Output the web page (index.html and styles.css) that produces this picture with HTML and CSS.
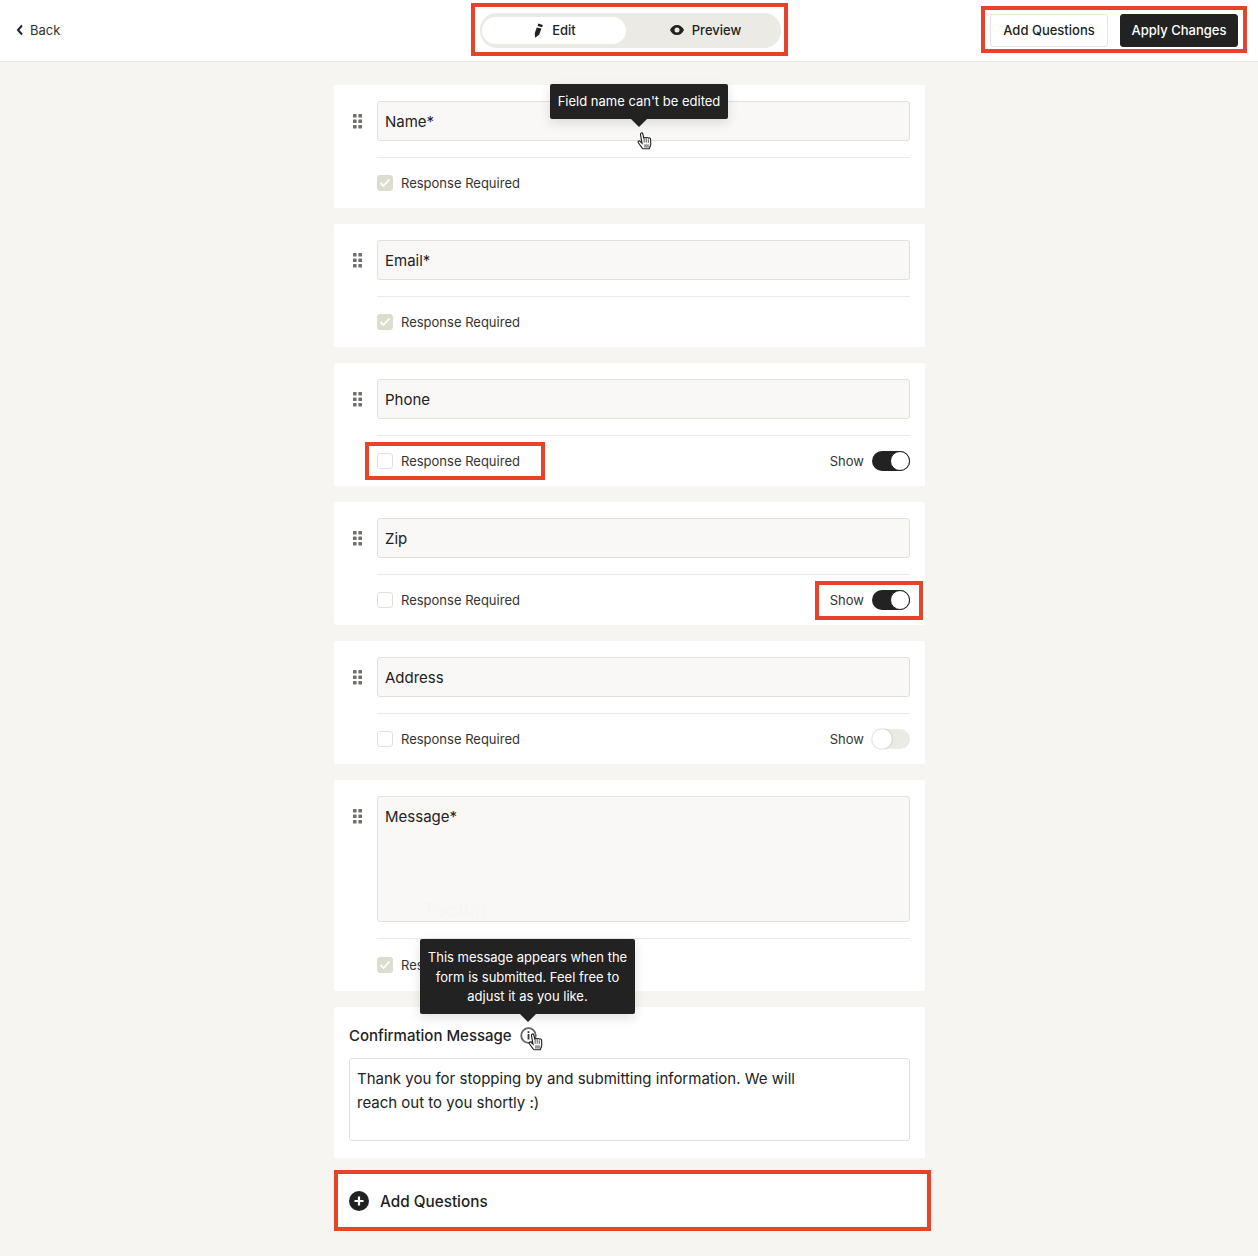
FILE: index.html
```html
<!DOCTYPE html>
<html lang="en">
<head>
<meta charset="utf-8">
<title>Form editor</title>
<link rel="stylesheet" href="styles.css">
</head>
<body>
<svg width="0" height="0" class="defs">
  <defs>
    <g id="hand">
      <path d="M5.200 15 2 10.600c-.8-1.100.7-2.200 1.600-1.300l1.700 1.700L3.900 3c-.2-1.400 1.800-1.800 2.100-.4l1 4.300c0-1.300 1.900-1.400 2.100-.2 .1-1.100 1.900-1.100 2 .1 .3-.9 1.800-.7 1.900.4l.2 4.400c0 1.200-.4 2.200-1 3.100l-.3 1.300H6.200z" fill="#fff" stroke="#222" stroke-width="1"/>
      <path d="M7.200 7v3.500M9.100 7v3.500M11 7.500v3" fill="none" stroke="#222" stroke-width=".7"/>
      <rect x="7" y="12" width="4.800" height="3" fill="#999"/>
    </g>
    <g id="grip" fill="#70706c">
      <rect x="0" y="0" width="3.600" height="3.500" rx=".6"/><rect x="5.400" y="0" width="3.600" height="3.500" rx=".6"/>
      <rect x="0" y="5.500" width="3.600" height="3.500" rx=".6"/><rect x="5.400" y="5.500" width="3.600" height="3.500" rx=".6"/>
      <rect x="0" y="11" width="3.600" height="3.500" rx=".6"/><rect x="5.400" y="11" width="3.600" height="3.500" rx=".6"/>
    </g>
  </defs>
</svg>

<header class="topbar">
  <a class="back">
    <svg class="back-icon" width="8" height="12" viewBox="0 0 8 12"><path d="M6 1.500 2 6l4 4.500" fill="none" stroke="#222" stroke-width="2"/></svg>
    Back
  </a>
  <div class="seg">
    <div class="seg-item seg-active">
      <svg width="12" height="15" viewBox="0 0 12 15"><path d="M4.800 4.400 9.400 5.600 7.200 11.800 3 14.800 2.800 10z" fill="#222"/><path d="M5.600 2.900 6.300.6 10.900 1.900 10.100 4.200z" fill="#222"/></svg>
      <span>Edit</span>
    </div>
    <div class="seg-item seg-rest">
      <svg width="14" height="10" viewBox="0 0 14 10"><path d="M7 0C3.800 0 1.300 2 0 5c1.300 3 3.800 5 7 5s5.700-2 7-5c-1.300-3-3.800-5-7-5zm0 7.500A2.500 2.500 0 1 1 7 2.500a2.500 2.500 0 0 1 0 5z" fill="#222"/></svg>
      <span>Preview</span>
    </div>
  </div>
  <div class="actions">
    <button class="btn btn-light">Add Questions</button>
    <button class="btn btn-dark">Apply Changes</button>
  </div>
</header>

<main class="list">
  <section class="card">
    <div class="field-row">
      <svg class="grip" width="9" height="15" viewBox="0 0 9 15"><use href="#grip"/></svg>
      <div class="field">Name*</div>
    </div>
    <div class="options">
      <label class="check"><span class="box box-on"><svg width="12" height="10" viewBox="0 0 12 10"><path d="M1.500 5 4.500 8 10.500 1.500" fill="none" stroke="#fff" stroke-width="1.800"/></svg></span>Response Required</label>
    </div>
  </section>

  <section class="card">
    <div class="field-row">
      <svg class="grip" width="9" height="15" viewBox="0 0 9 15"><use href="#grip"/></svg>
      <div class="field">Email*</div>
    </div>
    <div class="options">
      <label class="check"><span class="box box-on"><svg width="12" height="10" viewBox="0 0 12 10"><path d="M1.500 5 4.500 8 10.500 1.500" fill="none" stroke="#fff" stroke-width="1.800"/></svg></span>Response Required</label>
    </div>
  </section>

  <section class="card">
    <div class="field-row">
      <svg class="grip" width="9" height="15" viewBox="0 0 9 15"><use href="#grip"/></svg>
      <div class="field">Phone</div>
    </div>
    <div class="options">
      <label class="check"><span class="box"></span>Response Required</label>
      <div class="show">Show<span class="toggle toggle-on"><i></i></span></div>
    </div>
  </section>

  <section class="card">
    <div class="field-row">
      <svg class="grip" width="9" height="15" viewBox="0 0 9 15"><use href="#grip"/></svg>
      <div class="field">Zip</div>
    </div>
    <div class="options">
      <label class="check"><span class="box"></span>Response Required</label>
      <div class="show">Show<span class="toggle toggle-on"><i></i></span></div>
    </div>
  </section>

  <section class="card">
    <div class="field-row">
      <svg class="grip" width="9" height="15" viewBox="0 0 9 15"><use href="#grip"/></svg>
      <div class="field">Address</div>
    </div>
    <div class="options">
      <label class="check"><span class="box"></span>Response Required</label>
      <div class="show">Show<span class="toggle"><i></i></span></div>
    </div>
  </section>

  <section class="card">
    <div class="field-row">
      <svg class="grip" width="9" height="15" viewBox="0 0 9 15"><use href="#grip"/></svg>
      <div class="field field-tall">Message*<span class="ghost">Tooltip</span></div>
    </div>
    <div class="options options-tall">
      <label class="check"><span class="box box-on"><svg width="12" height="10" viewBox="0 0 12 10"><path d="M1.500 5 4.500 8 10.500 1.500" fill="none" stroke="#fff" stroke-width="1.800"/></svg></span><span class="clip">Res</span></label>
    </div>
  </section>

  <section class="card confirm">
    <div class="confirm-head">
      <h2>Confirmation Message</h2>
      <svg class="info" width="17" height="17" viewBox="0 0 17 17"><circle cx="8.500" cy="8.500" r="7.300" fill="none" stroke="#666" stroke-width="1.800"/><rect x="7.600" y="7" width="1.800" height="5.500" fill="#333"/><rect x="7.600" y="4.200" width="1.800" height="1.800" fill="#333"/></svg>
    </div>
    <div class="message">Thank you for stopping by and submitting information. We will<br>reach out to you shortly :)</div>
  </section>

  <section class="card add">
    <svg width="20" height="20" viewBox="0 0 20 20"><circle cx="10" cy="10" r="10" fill="#222"/><path d="M10 5.500v9M5.500 10h9" stroke="#fff" stroke-width="2.200"/></svg>
    <span>Add Questions</span>
  </section>
</main>

<div class="tip tip-name">Field name can't be edited</div>
<svg class="cursor cursor-name" width="18" height="20" viewBox="0 0 16 18"><use href="#hand"/></svg>
<div class="tip tip-confirm">This message appears when the form is submitted. Feel free to adjust it as you like.</div>
<svg class="cursor cursor-confirm" width="18" height="20" viewBox="0 0 16 18"><use href="#hand"/></svg>

<div class="mark mark-seg"></div>
<div class="mark mark-actions"></div>
<div class="mark mark-required"></div>
<div class="mark mark-show"></div>
<div class="mark mark-add"></div>
</body>
</html>
```
FILE: styles.css
```css
* { box-sizing: border-box; }
html, body { margin: 0; padding: 0; }
body {
  position: relative;
  height: 1256px;
  overflow: hidden;
  background: #f6f5f1;
  color: #222;
  font-family: Inter, "Liberation Sans", sans-serif;
  font-size: 13px;
}
.defs { position: absolute; }

.topbar {
  display: grid;
  grid-template-columns: 1fr auto 1fr;
  align-items: center;
  height: 62px;
  padding: 0 20px 1px 16px;
  background: #fff;
  border-bottom: 1px solid #e9e8e2;
}
.back { display: flex; align-items: center; gap: 6px; color: #333; }
.seg {
  display: flex;
  width: 301px;
  height: 35px;
  margin-left: 7px;
  padding: 4px 2px;
  background: #ebeae4;
  border-radius: 17px;
}
.seg-item {
  display: flex;
  align-items: center;
  justify-content: center;
  gap: 8px;
  font-weight: 500;
  border-radius: 14px;
}
.seg-active { flex: none; width: 144px; background: #fff; }
.seg-rest { flex: 1; padding-left: 6px; }
.actions { display: flex; justify-content: flex-end; gap: 12px; }
.btn {
  width: 118px;
  height: 33px;
  padding: 0;
  border: 1px solid #e6e5df;
  border-radius: 3px;
  font: 500 13px Inter, "Liberation Sans", sans-serif;
  color: #222;
  background: #fff;
}
.btn-dark { background: #222; border-color: #222; color: #fff; }

.list {
  display: flex;
  flex-direction: column;
  align-items: center;
  gap: 16px;
  padding: 23px 0 0 1px;
}
.card {
  width: 591px;
  padding: 16px 15px 0 16px;
  background: #fff;
  border-radius: 2px;
}
.field-row { display: flex; gap: 15px; }
.grip { flex: none; margin: 13px 0 0 3px; }
.field {
  position: relative;
  flex: 1;
  height: 40px;
  padding: 0 7px;
  line-height: 39px;
  font-size: 15px;
  background: #f9f8f6;
  border: 1px solid #e1e0da;
  border-radius: 3px;
}
.field-tall { height: 126px; }
.ghost {
  position: absolute;
  left: 45px;
  top: 101px;
  font-size: 20px;
  line-height: 24px;
  color: #f7f6f3;
}
.options {
  display: flex;
  align-items: center;
  justify-content: space-between;
  height: 51px;
  margin: 16px 0 0 27px;
  border-top: 1px solid #eaeae5;
}
.options-tall { height: 53px; }
.check { display: flex; align-items: center; gap: 8px; color: #333; }
.box {
  display: flex;
  align-items: center;
  justify-content: center;
  width: 16px;
  height: 16px;
  background: #fff;
  border: 1px solid #e1e0da;
  border-radius: 3px;
}
.box-on { background: #dddcd0; border-color: #dddcd0; }
.show { display: flex; align-items: center; gap: 8px; color: #333; }
.toggle {
  display: flex;
  justify-content: flex-start;
  width: 38px;
  height: 20px;
  background: #ebeae5;
  border-radius: 10px;
}
.toggle i {
  width: 20px;
  height: 20px;
  background: #fff;
  border-radius: 50%;
  box-shadow: 0 0 2px rgba(0, 0, 0, .3);
}
.toggle-on { justify-content: flex-end; background: #222; }
.toggle-on i { border: 1.500px solid #222; box-shadow: none; }

.confirm { height: 151px; }
.confirm-head { display: flex; align-items: center; gap: 8px; height: 24px; margin: 0 0 11px -1px; }
.confirm-head h2 { margin: 0; font-size: 15px; font-weight: 500; }
.message {
  height: 83px;
  margin-left: -1px;
  padding: 8px 7px;
  font-size: 15px;
  line-height: 24px;
  border: 1px solid #e1e0da;
  border-radius: 3px;
}
.add {
  display: flex;
  align-items: center;
  gap: 11px;
  height: 52px;
  padding: 2px 16px 0 15px;
  font-size: 15.300px;
  font-weight: 500;
}

.tip {
  position: absolute;
  background: #222;
  color: #fff;
  border-radius: 2px;
  text-align: center;
  box-shadow: 0 4px 12px rgba(0, 0, 0, .12);
}
.tip::after {
  content: "";
  position: absolute;
  top: 100%;
  left: 50%;
  margin-left: -8px;
  border: 8px solid transparent;
  border-top-color: #222;
  border-bottom: 0;
}
.tip-name { left: 550px; top: 84px; width: 178px; height: 35px; line-height: 35px; }
.tip-confirm { left: 420px; top: 939px; width: 215px; height: 75px; padding: 9px 6px; line-height: 19.500px; }
.cursor { position: absolute; }
.cursor-name { left: 636px; top: 131px; }
.cursor-confirm { left: 527px; top: 1032px; }

.mark { position: absolute; border: 4px solid #e8432a; }
.mark-seg { left: 471px; top: 3px; width: 317px; height: 53px; }
.mark-actions { left: 981px; top: 6px; width: 266px; height: 47px; }
.mark-required { left: 365px; top: 442px; width: 180px; height: 38px; }
.mark-show { left: 815px; top: 581px; width: 108px; height: 39px; }
.mark-add { left: 334px; top: 1170px; width: 597px; height: 61px; }
```
